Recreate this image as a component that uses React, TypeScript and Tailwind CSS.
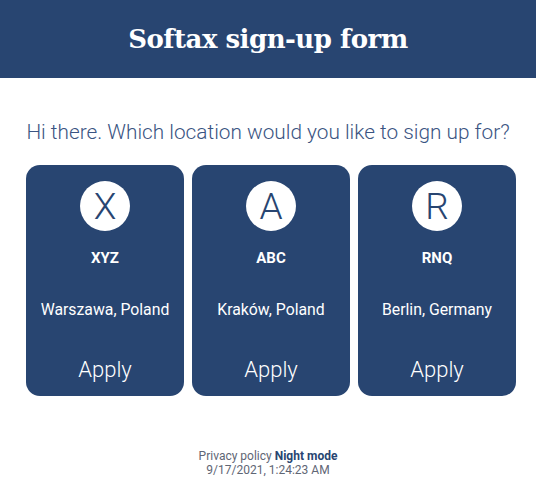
import React from 'react';

const locations = [
  { letter: 'X', code: 'XYZ', place: 'Warszawa, Poland' },
  { letter: 'A', code: 'ABC', place: 'Kraków, Poland' },
  { letter: 'R', code: 'RNQ', place: 'Berlin, Germany' },
];

const App: React.FC = () => {
  return (
    <div className="min-h-screen bg-white font-['Roboto',sans-serif]">
      <header className="h-[78px] bg-[#284571] flex items-center justify-center">
        <h1 className="text-white text-[26px] font-bold font-['DejaVu_Serif',serif] tracking-[-0.5px]">
          Softax sign-up form
        </h1>
      </header>

      <p className="mt-[42px] text-center text-[20.8px] font-light text-[#3a5482] leading-6">
        Hi there. Which location would you like to sign up for?
      </p>

      <div className="mt-[21px] ml-[26px] w-[490px] grid grid-cols-3 gap-2">
        {locations.map((loc) => (
          <div
            key={loc.code}
            className="h-[231px] rounded-[14px] bg-[#284571] text-white flex flex-col items-center"
          >
            <div className="mt-4 w-[50px] h-[50px] rounded-full bg-white flex items-center justify-center text-[#284571] text-[37px] font-light leading-none">
              {loc.letter}
            </div>
            <div className="mt-[16px] text-[15px] font-bold">{loc.code}</div>
            <div className="mt-[28px] text-[15.8px]">{loc.place}</div>
            <button className="mt-[32px] text-[22px] font-light text-white">Apply</button>
          </div>
        ))}
      </div>

      <footer className="mt-[53px] text-center text-[12px] text-[#5f6675] leading-[14px]">
        <div>
          Privacy policy <span className="font-bold text-[#284571]">Night mode</span>
        </div>
        <div>9/17/2021, 1:24:23 AM</div>
      </footer>
    </div>
  );
};

export default App;
